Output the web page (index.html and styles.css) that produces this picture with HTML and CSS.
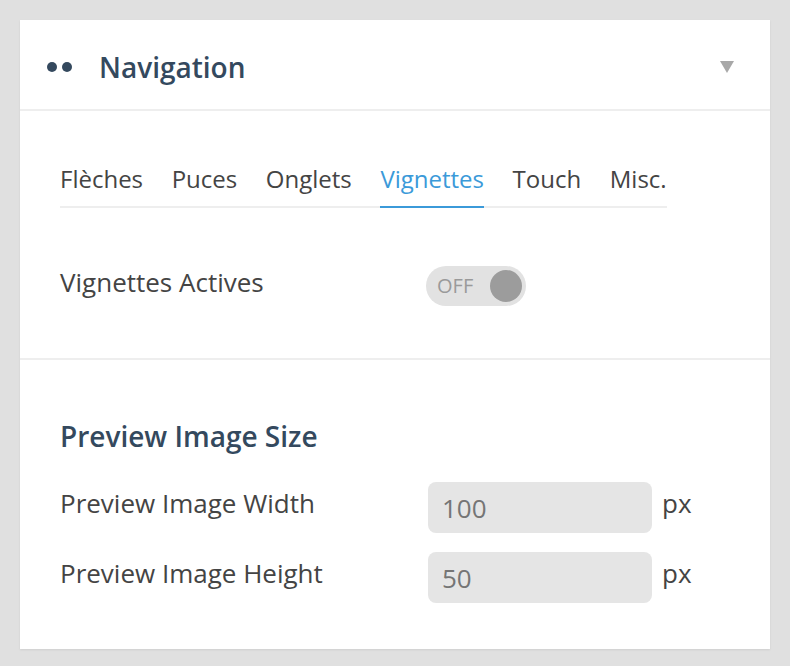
FILE: index.html
```html
<!DOCTYPE html>
<html lang="fr">
<head>
<meta charset="utf-8">
<title>Navigation</title>
<link rel="stylesheet" href="styles.css">
</head>
<body>
<div class="card">
  <div class="card-header">
    <span class="dots"><span class="dot"></span><span class="dot"></span></span>
    <h2 class="card-title">Navigation</h2>
    <span class="caret"></span>
  </div>
  <div class="section section-tabs">
    <ul class="tabs">
      <li class="tab">Flèches</li>
      <li class="tab">Puces</li>
      <li class="tab">Onglets</li>
      <li class="tab active">Vignettes</li>
      <li class="tab">Touch</li>
      <li class="tab">Misc.</li>
    </ul>
    <div class="toggle-row">
      <span class="label">Vignettes Actives</span>
      <span class="toggle"><span class="toggle-text">OFF</span><span class="knob"></span></span>
    </div>
  </div>
  <div class="section section-size">
    <h3 class="section-title">Preview Image Size</h3>
    <div class="field-row">
      <span class="label field-label">Preview Image Width</span>
      <input class="field-input" type="text" value="100">
      <span class="unit">px</span>
    </div>
    <div class="field-row">
      <span class="label field-label">Preview Image Height</span>
      <input class="field-input" type="text" value="50">
      <span class="unit">px</span>
    </div>
  </div>
</div>
</body>
</html>
```
FILE: styles.css
```css
* { box-sizing: border-box; }

html, body {
  margin: 0;
  padding: 0;
}

body {
  background: #e0e0e0;
  padding: 20px;
  font-family: "Open Sans", "Noto Sans", sans-serif;
  color: #444;
}

.card {
  width: 750px;
  background: #fff;
  box-shadow: 0 1px 2px rgba(0, 0, 0, 0.08);
}

.card-header {
  height: 91px;
  display: flex;
  align-items: center;
  padding: 5px 36px 0 27px;
  border-bottom: 2px solid #eeeeee;
}

.dots {
  display: flex;
  gap: 5px;
}

.dot {
  width: 10px;
  height: 10px;
  border-radius: 50%;
  background: #34495e;
}

.card-title {
  margin: 0 0 0 27px;
  font-size: 28px;
  font-weight: 600;
  color: #34495e;
  flex: 1;
}

.caret {
  width: 0;
  height: 0;
  border-left: 7px solid transparent;
  border-right: 7px solid transparent;
  border-top: 12px solid #a8a8a8;
}

.section {
  padding: 0 40px;
}

.section-tabs {
  padding-top: 51px;
  padding-bottom: 52px;
  border-bottom: 2px solid #eeeeee;
}

.tabs {
  list-style: none;
  margin: 0;
  padding: 0;
  display: inline-flex;
  gap: 28.6px;
  border-bottom: 2px solid #eeeeee;
}

.tab {
  font-size: 24px;
  line-height: 34px;
  padding-bottom: 10px;
  border-bottom: 2px solid transparent;
  margin-bottom: -2px;
  color: #444;
}

.tab.active {
  color: #3b9ad9;
  border-bottom-color: #3b9ad9;
}

.toggle-row {
  display: flex;
  align-items: flex-start;
  margin-top: 58px;
}

.label {
  font-size: 26px;
  line-height: 32px;
  color: #444;
}

.toggle-row .label {
  width: 366px;
}

.toggle {
  width: 100px;
  height: 40px;
  border-radius: 20px;
  background: #e2e2e2;
  display: flex;
  align-items: center;
  justify-content: space-between;
  padding: 0 4px 0 11px;
}

.toggle-text {
  font-size: 20px;
  color: #9a9a9a;
  line-height: 1;
}

.knob {
  width: 32px;
  height: 32px;
  border-radius: 50%;
  background: #9c9c9c;
}

.section-size {
  padding-top: 57px;
  padding-bottom: 46px;
}

.section-title {
  margin: 0 0 27px;
  font-size: 28px;
  font-weight: 600;
  color: #34495e;
}

.field-row {
  display: flex;
  align-items: flex-start;
}

.field-row + .field-row {
  margin-top: 19px;
}

.field-label {
  width: 368px;
  line-height: 42px;
}

.field-input {
  width: 224px;
  height: 51px;
  border: none;
  border-radius: 8px;
  background: #e5e5e5;
  padding: 0 14px;
  font-family: "Open Sans", "Noto Sans", sans-serif;
  font-size: 26px;
  color: #757575;
  outline: none;
}

.unit {
  margin-left: 10px;
  font-size: 26px;
  line-height: 42px;
  color: #444;
}
```
